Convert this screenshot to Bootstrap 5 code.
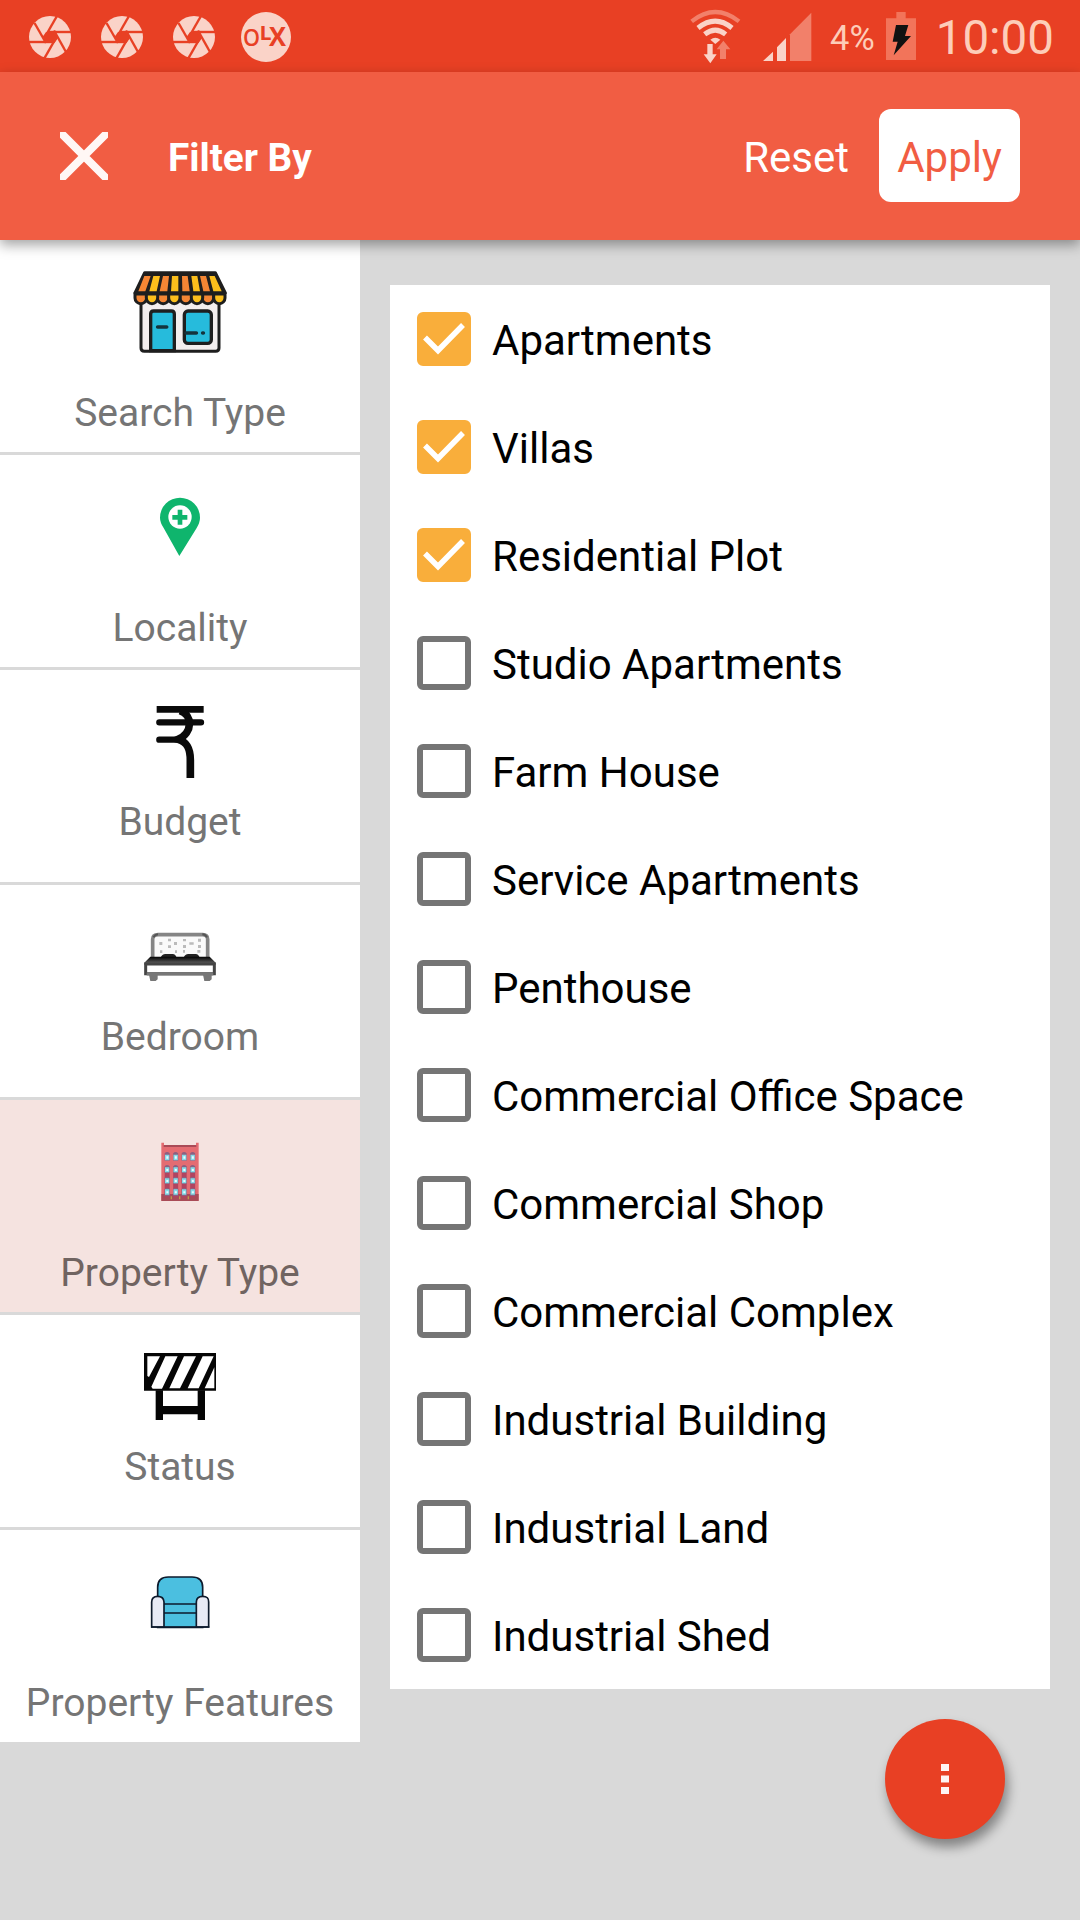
<!DOCTYPE html>
<html lang="en">
<head>
<meta charset="utf-8">
<meta name="viewport" content="width=device-width, initial-scale=1">
<title>Filter By</title>
<link href="https://cdn.jsdelivr.net/npm/bootstrap@5.3.0/dist/css/bootstrap.min.css" rel="stylesheet">
<style>
body{font-family:Roboto,"Liberation Sans",sans-serif;background:#d9d9d9;width:1080px;height:1920px;overflow:hidden}
svg{display:block;flex:none}
.status-bar{height:72px;background:#e84024;padding:0 26px 0 29px;color:#fdcdb9}
.status-left{gap:30px;padding-top:2px}
.olx{margin-left:-4px}
.pct{font-size:34.5px;line-height:72px;margin-left:14px;padding-top:4px}
.battery{margin-left:11px}
.clock{font-size:47.5px;line-height:72px;padding-top:4px;margin-left:20px}
.app-bar{height:168px;background:#f15d43;padding:0 60px;z-index:2;box-shadow:0 5px 12px rgba(0,0,0,.36)}
.app-title{font-size:38.7px;font-weight:700;line-height:46px;margin-left:60px;padding-top:3px}
.reset-btn,.apply-btn{font-size:42px;line-height:49px;border:0}
.reset-btn{color:#fff;margin-right:30px;padding:2px 0 0}
.apply-btn{color:#f15d43;background:#fff;width:141px;height:93px;border-radius:12px;padding:4px 0 0;margin-bottom:1px}
.sidebar{width:360px;background:#fff}
.side-item{box-sizing:content-box;height:194px;padding-top:18px;color:#757575}
.side-item+.side-item{border-top:3px solid #d9d9d9}
.side-item.selected{background:#f5e3e0;color:#706461}
.side-label{font-size:39px;line-height:46px;white-space:nowrap}
.tall .side-label{margin-top:24px}
.short .side-label{margin-top:3px}
.options{width:660px;margin:45px 30px 0;background:#fff}
.opt{height:108px;padding-left:27px;font-size:42px;line-height:49px;color:#000}
.opt .form-check-input{width:54px;height:54px;margin:0;border:6px solid #757575;border-radius:6px;float:none;flex:none}
.opt .form-check-input:checked{background-color:#f9ae3b;border-color:#f9ae3b;background-size:54px 54px;background-position:center;background-image:url("data:image/svg+xml,%3csvg xmlns='http://www.w3.org/2000/svg' viewBox='0 0 54 54'%3e%3cpath fill='none' stroke='%23fff' stroke-width='5.5' d='M8 25.5 21 38.5 46 13'/%3e%3c/svg%3e");background-origin:border-box}
.opt span{margin-left:21px;padding-top:3px}
.fab{right:75px;bottom:81px;width:120px;height:120px;background:#e84024;border:0;box-shadow:3px 8px 12px rgba(0,0,0,.4)}
</style>
</head>
<body class="position-relative">
<header class="status-bar d-flex align-items-center">
  <svg width="0" height="0" class="position-absolute"><defs>
    <g id="shutter"><circle cx="21" cy="21" r="21" fill="#fad3c8"/>
      <g stroke="#e84024" stroke-width="2.4" fill="none">
        <path d="M5.500 7 17 27"/>
        <path d="M28 0 16.500 20"/><path d="M43 16H19"/><path d="M37 36 25 14.500"/><path d="M15 43 27 22"/><path d="M0 26H23"/>
      </g><path fill="#e84024" d="M17 16h8l4 6-3.500 5h-8l-4-6z"/></g>
  </defs></svg>
  <div class="status-left d-flex align-items-center me-auto">
    <svg width="42" height="42"><use href="#shutter"/></svg>
    <svg width="42" height="42"><use href="#shutter"/></svg>
    <svg width="42" height="42"><use href="#shutter"/></svg>
    <svg class="olx" width="50" height="50"><circle cx="25" cy="25" r="25" fill="#fad3c8"/>
      <g fill="#e84024" font-family="Open Sans,sans-serif" font-weight="700"><text x="2" y="33.500" font-size="24" textLength="17" lengthAdjust="spacingAndGlyphs" font-weight="600">O</text><text x="18.500" y="28" font-size="19" textLength="12" lengthAdjust="spacingAndGlyphs">L</text><text x="28" y="34" font-size="26" textLength="17" lengthAdjust="spacingAndGlyphs">X</text></g></svg>
  </div>
  <svg width="126" height="72" viewBox="90 0 378 216">
    <g fill="none" stroke-width="13">
      <path stroke="#f2806a" d="M95 64Q166 8 237 64"/>
      <path stroke="#fad3c8" stroke-width="15" d="M114 84Q166 43 216 84"/>
      <path stroke="#fad3c8" stroke-width="15" d="M134 103Q166 78 197 103"/>
    </g>
    <path fill="#fad3c8" d="M151 119Q166 107 181 119L166 132Z"/>
    <path fill="#fad3c8" d="M142 132h16v31h12l-19 27-20-27h11z"/>
    <path fill="#f2806a" d="M190 122l21 26h-13v29h-18v-29h-10z"/>
    <path fill="#fad3c8" d="M309 183 339 155V183ZM351 183V142L378 114V183Z"/>
    <path fill="#f2806a" d="M390 183V103L454 38V183Z"/>
  </svg>
  <span class="pct">4%</span>
  <svg class="battery" width="30" height="72" viewBox="675 0 90 216">
    <path fill="#f2745a" d="M706 36h28v19h31v125h-90V55h31z"/>
    <path fill="#111" d="M705 75h37l-10 33h18l-52 58 12-41h-15z"/>
  </svg>
  <span class="clock">10:00</span>
</header>

<nav class="app-bar d-flex align-items-center position-relative text-white">
  <svg width="48" height="48" viewBox="0 0 48 48"><path d="M3 3 45 45M45 3 3 45" stroke="#fff" stroke-width="8" stroke-opacity=".95" stroke-linecap="square"/></svg>
  <span class="app-title me-auto">Filter By</span>
  <button class="reset-btn bg-transparent">Reset</button>
  <button class="apply-btn">Apply</button>
</nav>

<main class="d-flex align-items-start">
  <aside class="sidebar">
    <div class="side-item tall d-flex flex-column align-items-center">
      <svg width="108" height="108" viewBox="78 23 324 324">
        <path d="M123 150V293Q123 303 133 303H347Q357 303 357 293V150Z" fill="#f3eeee" stroke="#1e1e1e" stroke-width="9"/>
        <path d="M152 301V191Q152 182 161 182H214Q223 182 223 191V301Z" fill="#26bbdc" stroke="#1e1e1e" stroke-width="10"/>
        <rect x="253" y="182" width="81" height="97" rx="11" fill="#26bbdc" stroke="#1e1e1e" stroke-width="10"/>
        <path d="M173 230H200M258 248H289M308 248h2" stroke="#14333c" stroke-width="11" stroke-linecap="round"/>
        <path d="M134 67H346L376 128H105Z" fill="#1e1e1e" stroke="#1e1e1e" stroke-width="9" stroke-linejoin="round"/>
        <g fill="#f58634"><path d="M133 77H152L136 123H115ZM189 77H207L202 123H179ZM246 77H263L269 123H247ZM300 77H318L330 123H310Z"/></g>
        <g fill="#fcbf1c"><path d="M160 77H180L170 123H148ZM216 77H235V123H213ZM274 77H292L300 123H280ZM328 77H344L365 123H340Z"/></g>
        <g stroke="#1e1e1e" stroke-width="9">
          <g fill="#f58634"><path id="sc" d="M105 131H140V143A17.500 17 0 0 1 105 143Z"/><use href="#sc" x="67"/><use href="#sc" x="135"/><use href="#sc" x="201"/></g>
          <g fill="#fcbf1c"><path id="sd" d="M139 131H173V143A17 17 0 0 1 139 143Z"/><use href="#sd" x="67"/><use href="#sd" x="135"/><use href="#sd" x="202"/></g>
        </g>
      </svg>
      <span class="side-label">Search Type</span>
    </div>
    <div class="side-item tall d-flex flex-column align-items-center">
      <svg width="108" height="108" viewBox="78 9 324 324">
        <path fill="#0fb56d" d="M238 258 191 174Q180 157 180 143A60 60 0 0 1 300 143Q300 157 290 174Z"/>
        <circle cx="240" cy="141" r="35" fill="#fff"/>
        <path stroke="#0fb56d" stroke-width="14" d="M217 142H262M240 119V164"/>
      </svg>
      <span class="side-label">Locality</span>
    </div>
    <div class="side-item short d-flex flex-column align-items-center">
      <svg width="108" height="108" viewBox="78 24 324 324">
        <g fill="none" stroke="#0a0a0a" stroke-width="19" stroke-linecap="round"><path stroke-linecap="butt" stroke-width="20" d="M170 88H311"/><path d="M178 127H303M178 179H238"/><path stroke-width="23" stroke-linecap="butt" d="M240 92C278 105 279 158 235 178C264 187 271 209 271 240V294"/></g>
      </svg>
      <span class="side-label">Budget</span>
    </div>
    <div class="side-item short d-flex flex-column align-items-center">
      <svg width="108" height="108" viewBox="78 9 324 324">
        <defs><linearGradient id="bed" x2="0" y2="1"><stop stop-color="#000"/><stop offset="1" stop-color="#777"/></linearGradient></defs>
        <path d="M158 174V118Q158 104 174 104H308Q323 104 323 118V174" fill="#fafafa" stroke="#858585" stroke-width="11"/>
        <path d="M160 112Q165 104 174 103M307 103Q317 104 321 112" fill="none" stroke="#555" stroke-width="6"/>
        <g fill="#bbb"><path d="M178 126h9v9h-9zM204 116h9v8h-9zM222 126h9v9h-9zM204 136h9v8h-9zM249 117h9v7h-9zM249 135h9v9h-9zM268 127h13v7h-13zM294 116h9v9h-9zM294 135h9v9h-9zM180 151h7v8h-7zM225 151h6v8h-6zM249 150h6v8h-6zM292 150h9v8h-9z"/></g>
        <path fill="#222" d="M182 173Q186 162 196 162H218Q227 163 230 173ZM251 173Q255 162 265 162H287Q296 163 299 173Z"/>
        <path fill="url(#bed)" d="M151 170H329L347 188V195H133V188Z"/>
        <path d="M137 192H343V221H137Z" fill="#fff" stroke="#444" stroke-width="9"/>
        <path d="M140 222H340" stroke="#777" stroke-width="9"/>
        <path d="M147 224H173V238L167 243H151ZM309 224H335V238L329 243H313Z" fill="#777"/>
      </svg>
      <span class="side-label">Bedroom</span>
    </div>
    <div class="side-item tall selected d-flex flex-column align-items-center">
      <svg width="108" height="108" viewBox="258 -6 324 324">
        <path fill="#e46c72" d="M364 68h8v7h96v-7h8v174H364z"/>
        <path fill="#a94b57" d="M371 75H469V81H371zM364 222H476V243H364z"/>
        <g id="wincol"><path fill="#b04460" d="M374 140H389V232H374z"/><path fill="#8d6080" d="M374 100q7-8 15 0v22h-15zM374 139q7-8 15 0v20h-15zM374 173q7-6 15 0v19h-15zM374 207q7-6 15 0v21h-15z"/><path fill="#84dbe8" d="M375 104h13v17h-13zM375 142h13v15h-13zM375 175h13v15h-13zM375 208h13v16h-13z"/><path fill="#e9fbff" d="M379 109h6v7h-6zM379 147h6v6h-6zM379 180h6v6h-6zM379 214h6v6h-6z"/></g>
        <use href="#wincol" x="25.500"/><use href="#wincol" x="51"/><use href="#wincol" x="76.500"/>
        <path stroke="#bd9b48" stroke-width="4" d="M394 229V238M419 229V238M445 229V238"/>
      </svg>
      <span class="side-label">Property Type</span>
    </div>
    <div class="side-item short d-flex flex-column align-items-center">
      <svg width="108" height="108" viewBox="78 39 324 324">
        <path fill="#050505" d="M132 99H348V212H132z"/>
        <g fill="#fff"><path d="M142 109H180L147 171 142 168zM196 109H233L186 206H158L154 200ZM252 109H288L240 205H208ZM308 109H341L296 205H263ZM343 142V205H314Z"/></g>
        <path fill="#050505" d="M167 211h22v47h104v-47h22v89h-22v-17H189v17h-22z"/>
      </svg>
      <span class="side-label">Status</span>
    </div>
    <div class="side-item tall d-flex flex-column align-items-center">
      <svg width="108" height="108" viewBox="378 24 324 324">
        <g stroke="#0d1a2c" stroke-width="5">
          <path fill="#4bbfe0" d="M473 262V142Q473 111 505 111H576Q608 111 608 142V262Z"/>
          <path fill="none" d="M491 192H590M491 219H590"/>
          <path fill="#e7eaf5" d="M455 261V186Q455 169 473 169T492 186V261ZM589 261V186Q589 169 608 169T626 186V261Z"/>
          <path d="M453 261H628"/>
        </g>
      </svg>
      <span class="side-label">Property Features</span>
    </div>
  </aside>

  <section class="options">
    <label class="opt d-flex align-items-center"><input class="form-check-input" type="checkbox" checked><span>Apartments</span></label>
    <label class="opt d-flex align-items-center"><input class="form-check-input" type="checkbox" checked><span>Villas</span></label>
    <label class="opt d-flex align-items-center"><input class="form-check-input" type="checkbox" checked><span>Residential Plot</span></label>
    <label class="opt d-flex align-items-center"><input class="form-check-input" type="checkbox"><span>Studio Apartments</span></label>
    <label class="opt d-flex align-items-center"><input class="form-check-input" type="checkbox"><span>Farm House</span></label>
    <label class="opt d-flex align-items-center"><input class="form-check-input" type="checkbox"><span>Service Apartments</span></label>
    <label class="opt d-flex align-items-center"><input class="form-check-input" type="checkbox"><span>Penthouse</span></label>
    <label class="opt d-flex align-items-center"><input class="form-check-input" type="checkbox"><span>Commercial Office Space</span></label>
    <label class="opt d-flex align-items-center"><input class="form-check-input" type="checkbox"><span>Commercial Shop</span></label>
    <label class="opt d-flex align-items-center"><input class="form-check-input" type="checkbox"><span>Commercial Complex</span></label>
    <label class="opt d-flex align-items-center"><input class="form-check-input" type="checkbox"><span>Industrial Building</span></label>
    <label class="opt d-flex align-items-center"><input class="form-check-input" type="checkbox"><span>Industrial Land</span></label>
    <label class="opt d-flex align-items-center"><input class="form-check-input" type="checkbox"><span>Industrial Shed</span></label>
  </section>
</main>

<button class="fab position-absolute rounded-circle d-flex align-items-center justify-content-center" aria-label="More">
  <svg width="10" height="34" viewBox="0 0 10 34"><path fill="#fff" fill-opacity=".95" d="M1 2h8v7H1zM1 13.500h8v7H1zM1 25h8v7H1z"/></svg>
</button>
<script src="https://cdn.jsdelivr.net/npm/bootstrap@5.3.0/dist/js/bootstrap.bundle.min.js"></script>
</body>
</html>
